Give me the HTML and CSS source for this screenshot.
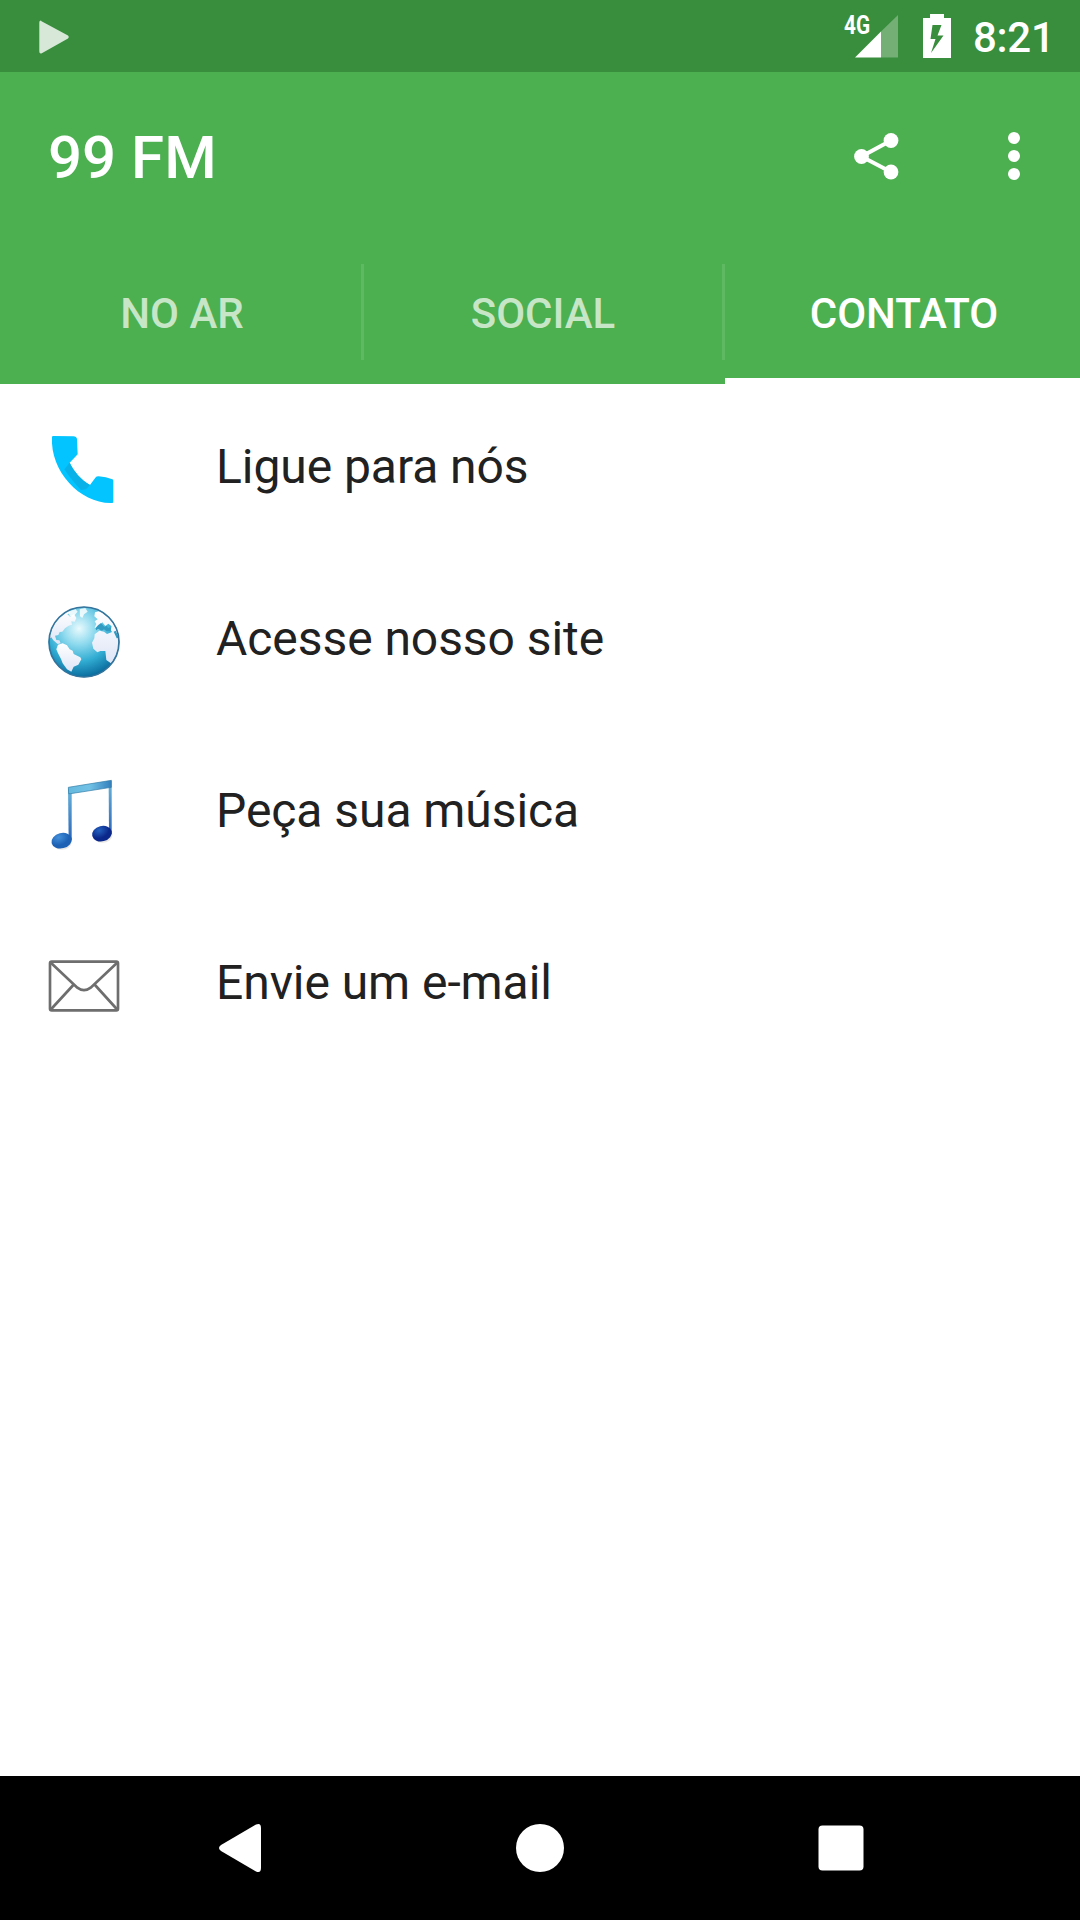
FILE: index.html
```html
<!DOCTYPE html>
<html lang="pt-BR">
<head>
<meta charset="utf-8">
<title>99 FM</title>
<link rel="stylesheet" href="styles.css">
</head>
<body>
<div class="screen">
  <div class="status">
    <svg class="play" width="32" height="36" viewBox="38 19 32 36"><path d="M40.600 20.800 L68 35.500 Q69.800 37 68 38.600 L41.800 53.200 Q39.300 54 39.300 51.500 V22.500 Q39.300 20 41.800 20.800Z"/></svg>
    <div class="status-right">
      <div class="signal">
        <svg width="43" height="43" viewBox="0 0 43 43"><path fill-opacity=".3" d="M26 16.500 L43 0 V42.500 H26Z"/><path d="M0 42.500 L26 16.500 V42.500Z"/></svg>
        <span class="net">4G</span>
      </div>
      <svg class="battery" width="28" height="44" viewBox="0 0 28 44"><path fill-rule="evenodd" d="M7 0 H21 V4 H28 V44 H0 V4 H7Z M9.500 11 L7.500 25 H12.500 L8 39 L20.500 21.500 H14.500 L18.500 11Z"/></svg>
      <span class="clock">8:21</span>
    </div>
  </div>

  <header class="toolbar">
    <h1 class="title">99 FM</h1>
    <div class="actions">
      <svg class="share" width="46" height="50" viewBox="853 131 46 50"><path d="M891 140.500 L861.500 156.500 L891 172" fill="none" stroke="#fff" stroke-width="4"/><circle cx="861.500" cy="156.500" r="7.400"/><circle cx="891" cy="140.500" r="7.400"/><circle cx="891" cy="172" r="7.400"/></svg>
      <svg width="12" height="48" viewBox="0 0 12 48"><circle cx="6" cy="6" r="6"/><circle cx="6" cy="24" r="6"/><circle cx="6" cy="42" r="6"/></svg>
    </div>
  </header>

  <nav class="tabs">
    <span class="tab">NO AR</span>
    <i class="divider"></i>
    <span class="tab social">SOCIAL</span>
    <i class="divider"></i>
    <span class="tab active">CONTATO</span>
  </nav>

  <main class="list">
    <div class="row">
      <svg class="icon" viewBox="54 42 216 216">
        <path fill="#03c4ff" d="M66 51 Q66 48 70 48 L130 49 Q140 50 141 57 L143 103 L119 128 C130 152 154 181 180 195 L196 173 Q199 169 206 169 Q228 170 247 178 Q250 179 250 183 V245 Q250 249 246 249 C152 252 60 155 66 51Z"/>
        <path fill="#08b2e9" d="M119 128 L103 148 C118 171 134 190 153 210 L168 208 L180 195 C154 181 130 152 119 128Z"/>
      </svg>
      <span class="label">Ligue para nós</span>
    </div>
    <div class="row">
      <svg class="icon" viewBox="54 48 216 216">
        <defs>
          <radialGradient id="sea" cx="43%" cy="31%" r="70%"><stop offset="0" stop-color="#e9fafd"/><stop offset=".32" stop-color="#8fdaee"/><stop offset=".66" stop-color="#32add3"/><stop offset="1" stop-color="#086a9c"/></radialGradient>
          <linearGradient id="land" x1="0" y1="0" x2="0" y2="1"><stop offset="0" stop-color="#fff"/><stop offset="1" stop-color="#dde5f6"/></linearGradient>
          <clipPath id="ball"><circle cx="162" cy="156" r="104"/></clipPath>
        </defs>
        <circle cx="162" cy="156" r="106" fill="url(#sea)"/>
        <g clip-path="url(#ball)">
          <path fill="url(#land)" d="M54 150 L78 84 L116 61 L121 69 L112 73 L120 80 L132 72 L139 84 L134 95 L124 94 L126 104 L116 107 L105 115 L97 125 L89 126 L85 135 L75 137 L79 150 L88 151 L92 160 L83 162 L70 151 L64 142Z"/>
          <path fill="url(#land)" d="M84 164 L98 160 L111 166 L119 178 L128 182 L131 192 L151 202 L154 208 L145 224 L131 230 L124 245 L111 238 L98 220 L93 207 L84 190 L79 178Z"/>
          <path fill="#fff" fill-opacity=".82" d="M115 65 L136 57 L143 65 L136 73 L128 82 L119 77Z M149 58 L166 54 L173 65 L162 73 L157 84 L150 79Z"/>
          <path fill="url(#land)" d="M195 67 L211 62 L234 74 L253 100 L268 132 L270 190 L246 222 L229 210 L226 183 L211 183 L202 187 L190 176 L186 158 L193 145 L194 133 L208 122 L222 125 L231 132 L246 126 L240 116 L245 109 L235 101 L226 108 L217 97 L210 104 L215 112 L202 119 L194 113 L199 102 L194 94 L203 88 L193 79Z"/>
          <path fill="#329bc2" d="M204 106 L213 99 L223 110 L231 107 L234 114 L244 111 L242 123 L230 124 L222 118 L216 122 L205 117 L199 121 L196 115Z M251 125 L257 122 L267 143 L260 145Z"/>
        </g>
        <circle cx="162" cy="156" r="105" fill="none" stroke="#34749d" stroke-width="5"/>
      </svg>
      <span class="label">Acesse nosso site</span>
    </div>
    <div class="row">
      <svg class="icon" viewBox="54 39 216 216">
        <defs>
          <linearGradient id="beam" x1="0" y1="0" x2="1" y2="0"><stop offset="0" stop-color="#65b9dd"/><stop offset=".5" stop-color="#71c1e5"/><stop offset="1" stop-color="#347fbd"/></linearGradient>
          <linearGradient id="stem" x1="0" y1="0" x2="0" y2="1"><stop offset="0" stop-color="#6ab7dc"/><stop offset="1" stop-color="#2b65b8"/></linearGradient>
          <radialGradient id="head1" cx="40%" cy="25%"><stop offset="0" stop-color="#438fda"/><stop offset="1" stop-color="#1d61b5"/></radialGradient>
          <radialGradient id="head2" cx="40%" cy="25%"><stop offset="0" stop-color="#2461bf"/><stop offset="1" stop-color="#0a288b"/></radialGradient>
        </defs>
        <g fill="#d6d2ca" opacity=".5"><ellipse cx="95" cy="231" rx="30" ry="23"/><ellipse cx="217" cy="210" rx="30" ry="23"/></g>
        <path fill="url(#stem)" d="M114 68 L125 82 V225 H116Z"/>
        <path fill="url(#stem)" d="M236 60 L245 46 V206 L237 210Z"/>
        <path fill="url(#beam)" stroke="#347ca6" stroke-width="2" d="M115 67 L244 46 V67 L122 86 L116 86Z"/>
        <ellipse cx="95" cy="227" rx="31" ry="23" transform="rotate(-14 95 227)" fill="url(#head1)"/>
        <ellipse cx="216" cy="206" rx="30" ry="23" transform="rotate(-14 216 206)" fill="url(#head2)"/>
      </svg>
      <span class="label">Peça sua música</span>
    </div>
    <div class="row">
      <svg class="icon" viewBox="54 30 216 216" fill="none">
        <g fill="none" stroke="#6e6e6e" stroke-width="8">
          <rect x="60" y="65" width="204" height="146" rx="5"/>
          <path d="M61 67 L142 143 Q162 158 182 143 L263 67 M61 210 L130 135 M263 210 L195 135"/>
        </g>
      </svg>
      <span class="label">Envie um e-mail</span>
    </div>
  </main>

  <footer class="navbar">
    <svg width="42" height="48" viewBox="0 0 42 48"><path d="M37 .600 Q42 -1.500 42 4 V44 Q42 49.500 37 47.400 L2 27 Q-2 24 2 21Z"/></svg>
    <svg width="48" height="48" viewBox="0 0 48 48"><circle cx="24" cy="24" r="24"/></svg>
    <svg width="46" height="46" viewBox="0 0 46 46"><rect x=".5" y=".5" width="45" height="45" rx="4"/></svg>
  </footer>
</div>
</body>
</html>
```
FILE: styles.css
```css
* { box-sizing: border-box; }

body {
  margin: 0;
  font-family: Roboto, "Liberation Sans", sans-serif;
  background: #fff;
}

svg { display: block; flex: none; fill: #fff; }

.screen {
  display: flex;
  flex-direction: column;
  width: 1080px;
  height: 1920px;
  overflow: hidden;
}

.status {
  display: flex;
  justify-content: space-between;
  height: 72px;
  padding: 0 31px 0 38px;
  background: #388e3c;
  color: #fff;
}
.play { margin-top: 19px; fill: #d7e8d8; }

.status-right { display: flex; align-items: flex-start; }
.signal { position: relative; margin: 15px 25px 0 0; }
.net {
  position: absolute;
  left: -11px;
  top: -4px;
  font: 700 26px/28px Roboto, sans-serif;
  transform: scaleX(.8);
  transform-origin: left;
}
.battery { margin: 14px 22px 0 0; }
.clock {
  width: 76px;
  margin-top: 13px;
  font-size: 42px;
  font-weight: 500;
  line-height: 49px;
  letter-spacing: -.3px;
  white-space: nowrap;
}

.toolbar {
  display: flex;
  align-items: center;
  justify-content: space-between;
  height: 168px;
  padding: 0 60px 0 48px;
  background: #4caf50;
}
.title {
  margin: 4px 0 0;
  color: #fff;
  font-size: 60px;
  font-weight: 500;
  line-height: 70px;
}
.actions { display: flex; align-items: center; gap: 109px; }

.tabs {
  display: grid;
  grid-template-columns: 361px 3px 358px 3px 355px;
  height: 144px;
  background: #4caf50;
}
.tab {
  display: flex;
  align-items: center;
  justify-content: center;
  padding: 8px 0 0 3px;
  color: rgba(255, 255, 255, .7);
  font-size: 42px;
  font-weight: 500;
  border-bottom: 6px solid transparent;
}
.tab.social { padding-left: 0; }
.tab.active { color: #fff; border-color: #fff; }
.divider { margin: 24px 0; background: #5fb963; }

.list { flex: 1; background: #fff; }
.row {
  display: flex;
  align-items: center;
  gap: 96px;
  height: 172px;
  padding-left: 48px;
}
.icon { width: 72px; height: 72px; overflow: visible; }
.label {
  padding-bottom: 7px;
  color: #212121;
  font-size: 48px;
  line-height: 56px;
  letter-spacing: -.06px;
  white-space: nowrap;
}

.navbar {
  display: flex;
  align-items: center;
  justify-content: space-between;
  height: 144px;
  padding: 0 216px 0 219px;
  background: #000;
}
```
